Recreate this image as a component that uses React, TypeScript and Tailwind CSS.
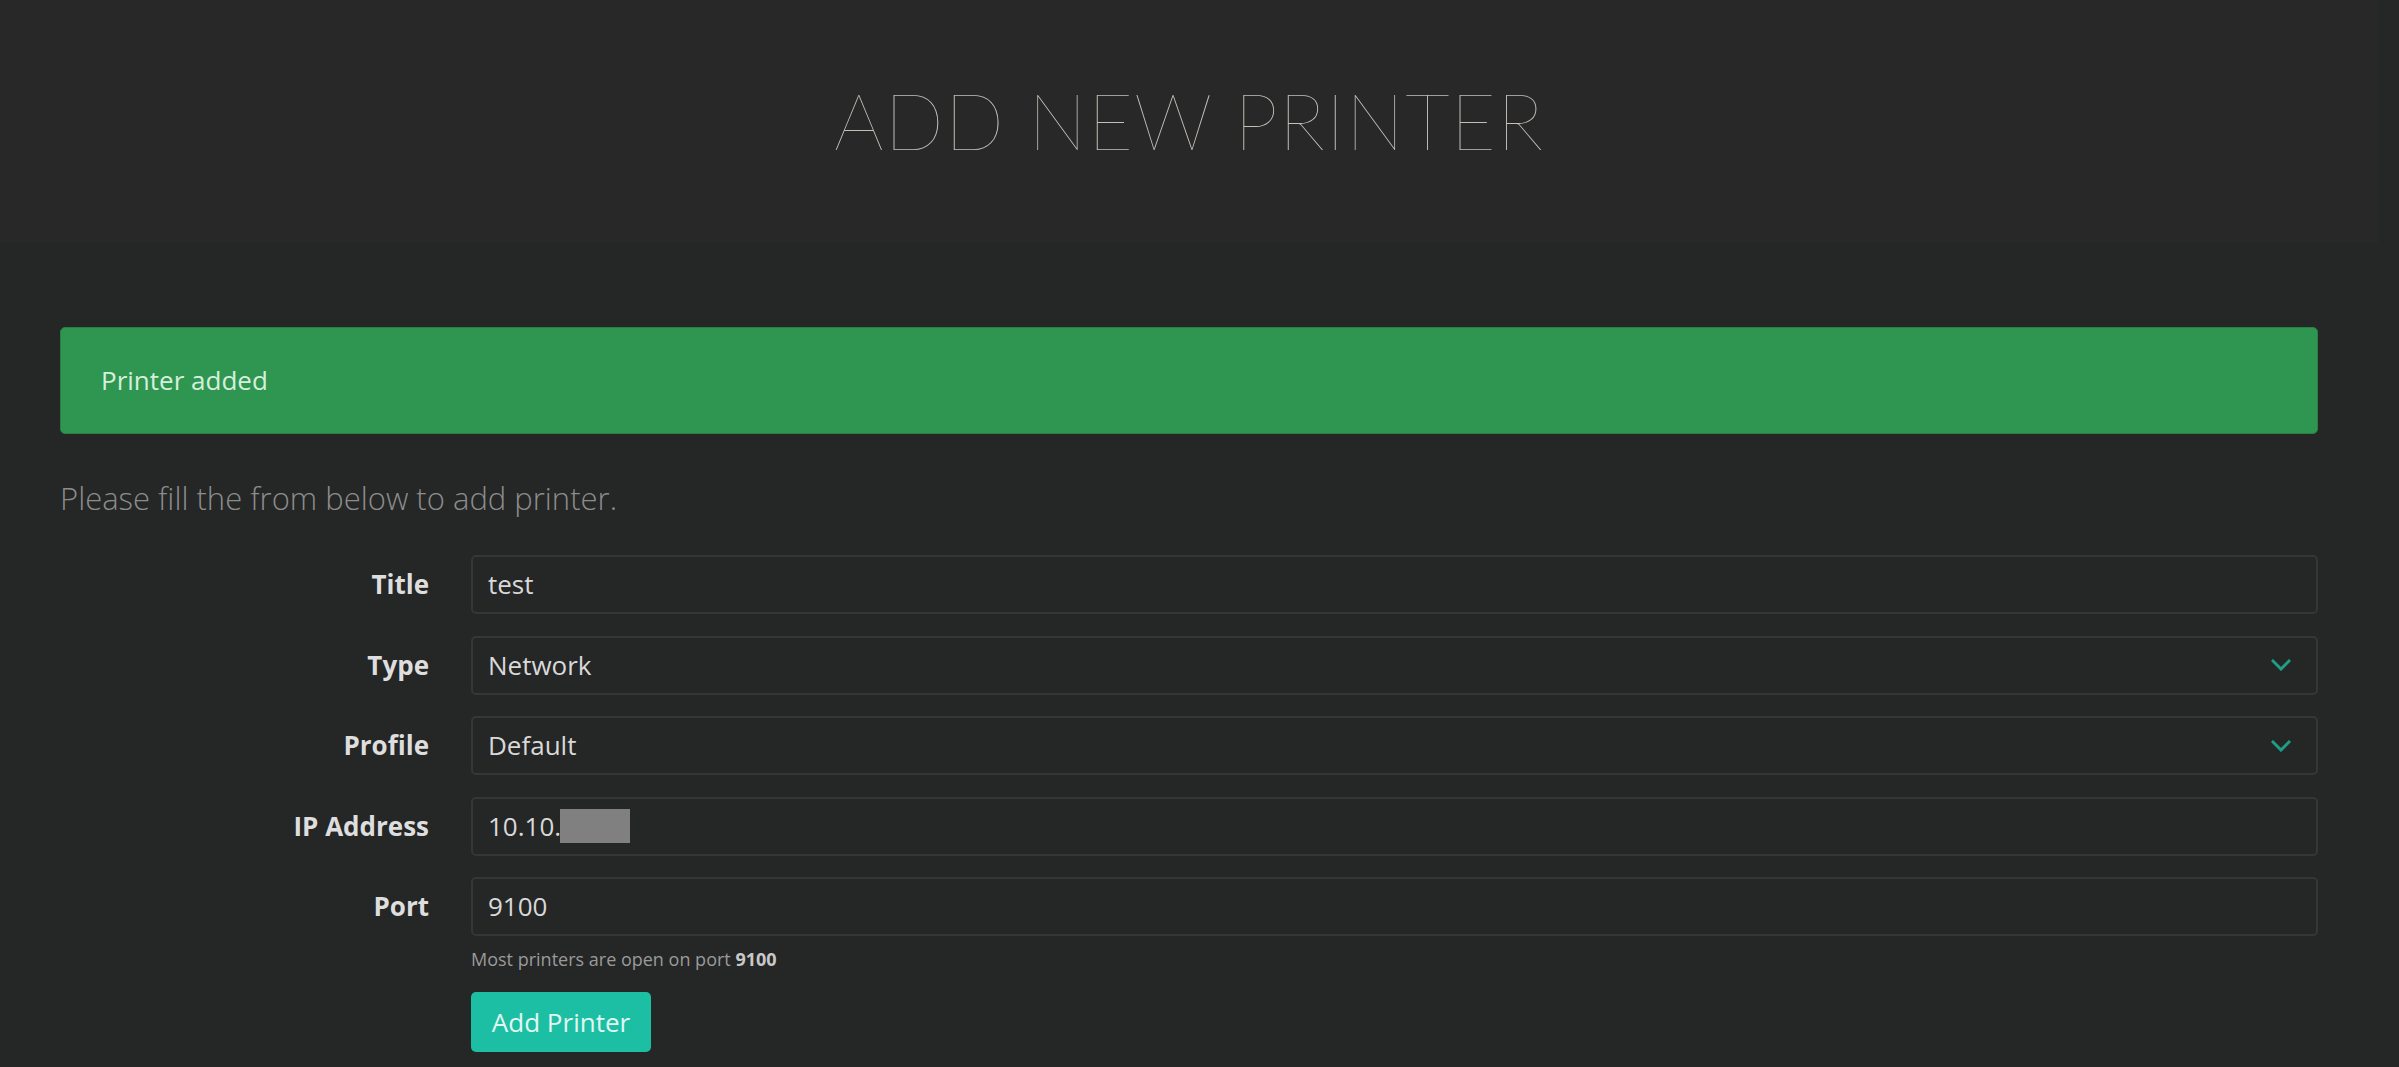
import React from "react";

const Chevron = () => (
  <svg width="20" height="12" viewBox="0 0 20 12" className="shrink-0">
    <polyline points="2,2 10,10 18,2" fill="none" stroke="#1f9e87" strokeWidth="3" strokeLinecap="square" />
  </svg>
);

function Row({ label, children, select }: { label: string; children: React.ReactNode; select?: boolean }) {
  return (
    <div className="flex items-center">
      <label className="w-[369px] shrink-0 text-right font-bold text-[26px] text-[#dedede]">{label}</label>
      <div className="ml-[42px] flex-1 h-[59px] rounded-[5px] border-2 border-[#353636] bg-[#252626] flex items-center pl-[15px] pr-[25px] text-[26px] text-[#d9d9d9]">
        <div className="flex-1 flex items-center">{children}</div>
        {select && <Chevron />}
      </div>
    </div>
  );
}

export default function App() {
  return (
    <div className="h-screen overflow-hidden bg-[#252626]" style={{ fontFamily: '"Open Sans", "Noto Sans", sans-serif' }}>
      <div className="h-[243px] bg-[#282828] w-[2378px] flex items-center justify-center">
        <h1 className="text-[78px] font-thin tracking-[1px] text-[#c4bfb7] leading-none mt-[-4px]" style={{ fontFamily: 'Lato, "Open Sans", sans-serif' }}>
          ADD NEW PRINTER
        </h1>
      </div>
      <div className="w-[2378px] px-[60px] pt-[84px]">
        <div className="h-[107px] rounded-[5px] bg-[#2f9651] border border-[#2a7f47] flex items-center pl-[40px] text-[26px] text-[#d6efdc]">
          Printer added
        </div>
        <p className="mt-[40px] text-[31px] font-light text-[#8c8c8c] leading-[48px]">Please fill the from below to add printer.</p>
        <div className="mt-[33px] flex flex-col gap-[21.5px]">
          <Row label="Title">test</Row>
          <Row label="Type" select>Network</Row>
          <Row label="Profile" select>Default</Row>
          <Row label="IP Address">
            <span>10.10.</span>
            <span className="inline-block w-[70px] h-[34px] bg-[#808080] ml-[-1px]" />
          </Row>
          <Row label="Port">9100</Row>
        </div>
        <div className="ml-[411px] mt-[10px] text-[18px] text-[#9a9a9a] leading-[26px]">
          Most printers are open on port <b className="text-[#c8c8c8]">9100</b>
        </div>
        <button className="ml-[411px] mt-[20px] h-[60px] w-[180px] rounded-[5px] bg-[#1cbfa3] text-[26px] text-[#e2f7f1] flex items-center justify-center">
          Add Printer
        </button>
      </div>
    </div>
  );
}
